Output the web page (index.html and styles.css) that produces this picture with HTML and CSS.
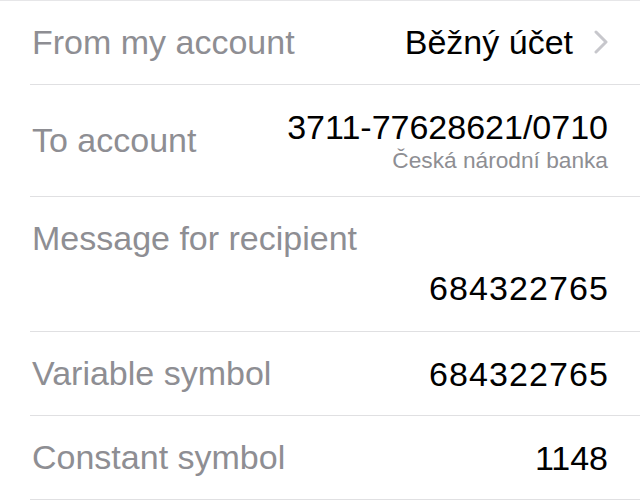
FILE: index.html
```html
<!DOCTYPE html>
<html lang="en">
<head>
<meta charset="utf-8">
<title>Payment details</title>
<link rel="stylesheet" href="styles.css">
</head>
<body>
<div class="list">
  <div class="row">
    <span class="label">From my account</span>
    <span class="value-link">
      <span class="value">Běžný účet</span>
      <svg class="chevron" width="14" height="24" viewBox="0 0 14 24" aria-hidden="true">
        <polyline points="2,2 12,12 2,22" fill="none" stroke="#c7c7cc" stroke-width="3" stroke-linecap="round" stroke-linejoin="round"/>
      </svg>
    </span>
  </div>
  <div class="row row-tall">
    <span class="label">To account</span>
    <span class="value-stack">
      <span class="value">3711-77628621/0710</span>
      <span class="sub">Česká národní banka</span>
    </span>
  </div>
  <div class="row row-column">
    <span class="label">Message for recipient</span>
    <span class="value value-right value-wide">684322765</span>
  </div>
  <div class="row">
    <span class="label">Variable symbol</span>
    <span class="value value-wide">684322765</span>
  </div>
  <div class="row">
    <span class="label">Constant symbol</span>
    <span class="value">1148</span>
  </div>
</div>
</body>
</html>
```

FILE: styles.css
```css
html, body {
  margin: 0;
  padding: 0;
  background: #ffffff;
}

body {
  font-family: "Liberation Sans", Arial, sans-serif;
  width: 640px;
  height: 500px;
  overflow: hidden;
}

.list {
  border-top: 1px solid #e6e6e8;
}

.row {
  margin-left: 30px;
  padding: 0 32px 0 2px;
  height: 83px;
  border-bottom: 1px solid #e0e0e2;
  display: flex;
  align-items: center;
  justify-content: space-between;
}

.row-tall {
  height: 111px;
}

.row-column {
  height: 135px;
  box-sizing: border-box;
  padding-top: 25px;
  padding-bottom: 24px;
  flex-direction: column;
  align-items: stretch;
  justify-content: flex-start;
  gap: 14px;
}

.label {
  font-size: 34px;
  line-height: 36px;
  color: #8e8e93;
  margin-top: -2px;
}

.value {
  font-size: 34px;
  line-height: 36px;
  color: #000000;
}

.value-wide {
  letter-spacing: 1.1px;
  margin-right: -1px;
}

.value-right {
  text-align: right;
}

.value-link {
  display: flex;
  align-items: center;
  gap: 21px;
  margin-top: -2px;
}

.chevron {
  display: block;
}

.value-stack {
  display: flex;
  flex-direction: column;
  align-items: flex-end;
  margin-top: 0;
}

.sub {
  font-size: 22.7px;
  line-height: 26px;
  margin-top: 2px;
  color: #8e8e93;
}
```
